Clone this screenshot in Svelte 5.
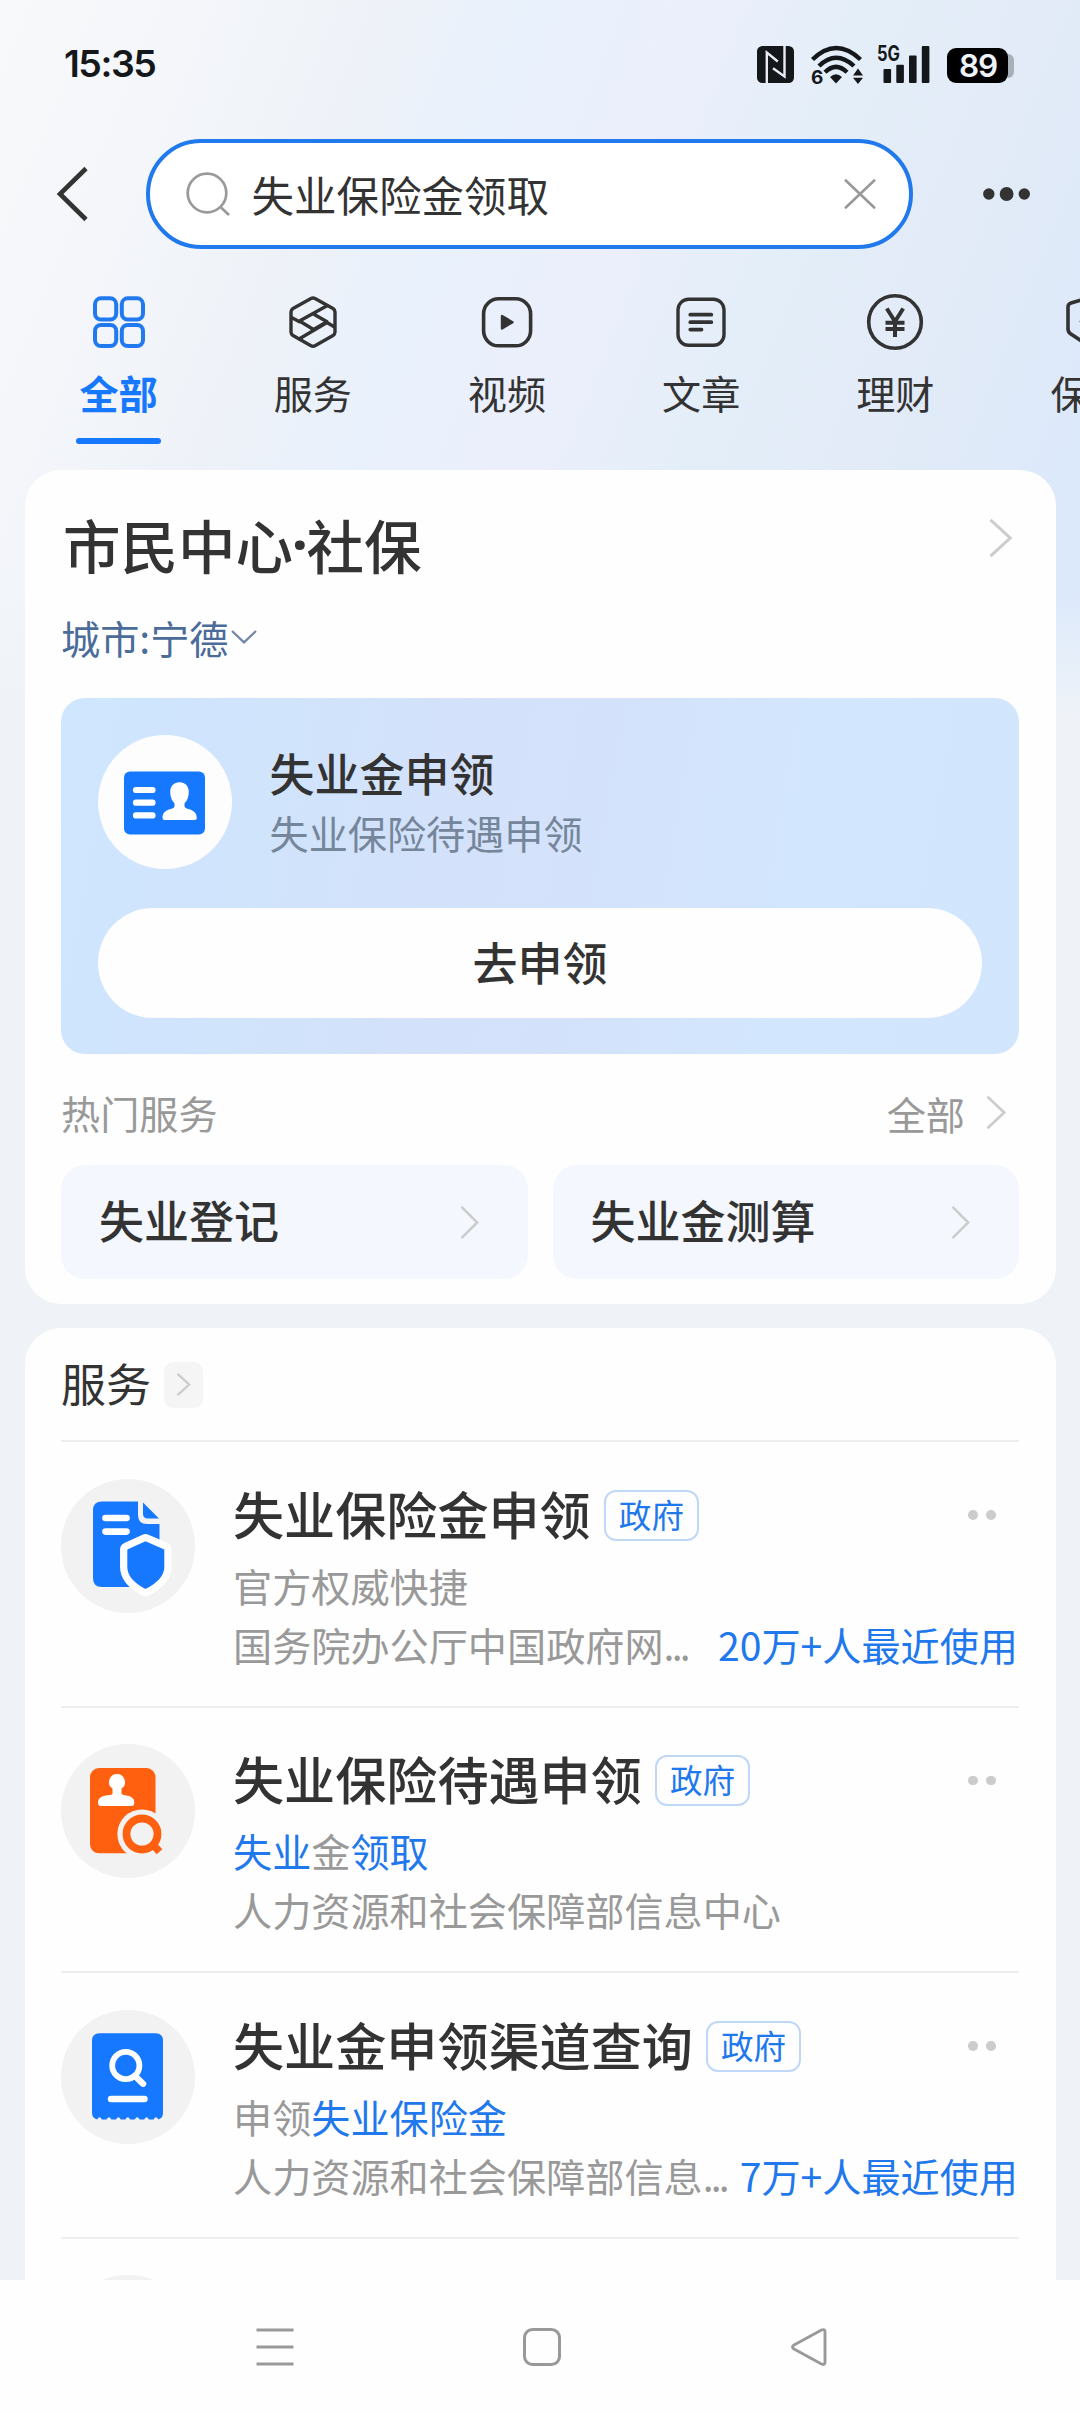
<script>
  const tabs = [
    { id: 'all', label: '全部' },
    { id: 'service', label: '服务' },
    { id: 'video', label: '视频' },
    { id: 'article', label: '文章' },
    { id: 'finance', label: '理财' },
    { id: 'insurance', label: '保险' }
  ];
  let active = $state('all');

  const hot = ['失业登记', '失业金测算'];

  const services = [
    {
      icon: 'shield',
      title: '失业保险金申领',
      desc: [{ t: '官方权威快捷' }],
      org: '国务院办公厅中国政府网',
      cut: true,
      usage: '20万+人最近使用'
    },
    {
      icon: 'stamp',
      title: '失业保险待遇申领',
      desc: [{ t: '失业', hit: true }, { t: '金' }, { t: '领取', hit: true }],
      org: '人力资源和社会保障部信息中心'
    },
    {
      icon: 'receipt',
      title: '失业金申领渠道查询',
      desc: [{ t: '申领' }, { t: '失业保险金', hit: true }],
      org: '人力资源和社会保障部信息',
      cut: true,
      usage: '7万+人最近使用'
    }
  ];
</script>

{#snippet chevron(w, h, sw)}
  <svg class="chev" width={w} height={h} viewBox="0 0 {w} {h}" fill="none" stroke-width={sw}>
    <path d="M1.5 0.8 L{w - 1.8} {h / 2} L1.5 {h - 0.8}" />
  </svg>
{/snippet}

{#snippet tabIcon(id)}
  <svg class="tab-icon" width="60" height="60" viewBox="0 0 60 60" fill="none" stroke="currentColor" stroke-width="3.6" stroke-linejoin="round" stroke-linecap="round">
    {#if id === 'all'}
      <rect x="6" y="6.3" width="21.2" height="21.2" rx="6" stroke-width="4" />
      <rect x="32.8" y="6.3" width="21.2" height="21.2" rx="6" stroke-width="4" />
      <rect x="6" y="32.9" width="21.2" height="21.2" rx="6" stroke-width="4" />
      <rect x="32.8" y="32.9" width="21.2" height="21.2" rx="6" stroke-width="4" />
    {:else if id === 'service'}
      <path d="M28 6.5 Q30 5.4 32 6.5 L50 16.5 Q52 17.8 52 20 V40 Q52 42.2 50 43.5 L32 53.7 Q30 54.8 28 53.7 L10 43.5 Q8 42.2 8 40 V20 Q8 17.8 10 16.5 Z" stroke-width="3.4" />
      <path d="M44 13.8 L16.5 29 L30.5 37.5 L44 29.8 L30 21.7 M8.5 25.5 L16.5 29.8 M16.5 46.8 L44 30.5 L51.5 35" stroke-width="3.4" />
    {:else if id === 'video'}
      <rect x="6.6" y="6.8" width="47" height="47" rx="15" />
      <path d="M25 24 V36.5 L35.5 30.2 Z" fill="currentColor" stroke-width="2.4" />
    {:else if id === 'article'}
      <rect x="7" y="7.3" width="46" height="46" rx="10.5" stroke-width="3.4" />
      <path d="M19.3 22.7 H40.3 M19.3 30.2 H40.3 M19.3 37.6 H30.5" stroke-width="3.8" />
    {:else if id === 'finance'}
      <circle cx="30" cy="30" r="26.3" stroke-width="3.6" />
      <path d="M21.8 16.5 L30 29.5 L38.2 16.5 M30 29.5 V45 M20.5 30.8 H39.5 M20.5 37 H39.5" stroke-width="4" stroke-linecap="butt" />
    {:else}
      <path d="M30 5.5 L49 11 Q52 12 52 15 V37 Q52 40 49.5 41.8 L30 54.5 L10.5 41.8 Q8 40 8 37 V15 Q8 12 11 11 Z" />
      <path d="M21.5 29.5 L28 36 L41 23" />
    {/if}
  </svg>
{/snippet}

{#snippet serviceIcon(id)}
  <svg width="134" height="134" viewBox="0 0 134 134">
    {#if id === 'shield'}
      <path fill="#1677ff" d="M41 22.5 H77 V36 Q77 45 86 45 H98.5 V108 H41 Q32 108 32 99 V31.5 Q32 22.5 41 22.5 Z" />
      <path fill="#1677ff" d="M82 23.5 L98 39.5 H87 Q82 39.5 82 34.5 Z" />
      <path stroke="#fff" stroke-width="6.6" stroke-linecap="round" d="M44.5 39 H65.5 M44.5 52.6 H65.5" />
      <path fill="#1677ff" stroke="#fff" stroke-width="14.5" stroke-linejoin="round" paint-order="stroke" d="M84.5 62.3 L103.3 70.5 V88 Q103.3 100.5 84.5 110 Q66.3 100.5 66.3 88 V70.5 Z" />
    {:else if id === 'stamp'}
      <rect x="29" y="24" width="65.5" height="85.3" rx="9" fill="#ff6010" />
      <path fill="#fff" d="M56 30 a8 8 0 0 1 4.5 14.6 V49.5 Q61 51 64 51.3 Q73.3 52.5 73.3 58 V59 Q73.3 62 70.3 62 H40 Q37 62 37 59 V58 Q37 52.5 46.5 51.3 Q51.5 51 51.5 49.5 V44.6 A8 8 0 0 1 56 30 Z" />
      <circle cx="81" cy="90" r="24.6" fill="#f2f2f2" />
      <rect x="81" y="109.3" width="24" height="8" fill="#f2f2f2" />
      <circle cx="81" cy="90" r="15.5" fill="none" stroke="#ff6010" stroke-width="7.8" />
      <path d="M91.5 100 L98.5 107.8" stroke="#ff6010" stroke-width="7.5" />
    {:else if id === 'receipt'}
      <path fill="#1677ff" d="M38.5 23.3 H94.5 Q102 23.3 102 31 V103 Q102 108 97.3 109.5 q-2.3 -4.6 -4.7 0 h-4.7 q-2.3 -4.6 -4.7 0 h-4.7 q-2.3 -4.6 -4.7 0 h-4.7 q-2.3 -4.6 -4.7 0 h-4.7 q-2.3 -4.6 -4.7 0 h-4.7 q-2.3 -4.6 -4.7 0 h-4.7 q-2.3 -4.6 -4.7 0 Q31 108 31 103 V31 Q31 23.3 38.5 23.3 Z" />
      <circle cx="64.8" cy="55.5" r="13.6" fill="none" stroke="#fff" stroke-width="5.8" />
      <path stroke="#fff" stroke-width="6.4" stroke-linecap="round" d="M74 66 L82 73.7 M50 89 H83.5" />
    {/if}
  </svg>
{/snippet}

<div class="phone">
  <div class="screen">
    <div class="status">
      <span class="time">15:35</span>
      <svg class="nfc" width="37" height="37" viewBox="0 0 37 37">
        <rect width="37" height="37" rx="5.5" fill="#15181b" />
        <path d="M9.8 37 V6.5 L20.8 15.5 M27.5 0 V30.5 L16 22.3" fill="none" stroke="#e8edf8" stroke-width="2.4" />
      </svg>
      <svg class="wifi" width="53" height="40" viewBox="0 0 53 40">
        <g fill="none" stroke="#15181b" stroke-width="4.4">
          <path d="M1.5 13.5 Q25 -9.5 49.5 13.5" />
          <path d="M8 20 Q25 3.5 43 20" />
          <path d="M14 26.3 Q25 15.5 36 26.3" />
        </g>
        <path d="M19 31 Q25 25.5 31 31 L25 37.5 Z" fill="#15181b" />
        <path d="M42 29.5 L47 22.5 L52 29.5 Z M42 31.8 L47 38 L52 31.8 Z" fill="#15181b" />
        <text x="0" y="37.6" font-size="19" font-weight="700" fill="#15181b">6</text>
      </svg>
      <svg class="signal" width="53" height="38" viewBox="0 0 53 38" fill="#15181b">
        <text x="0" y="15" font-size="21" font-weight="700" textLength="23" lengthAdjust="spacingAndGlyphs">5G</text>
        <rect x="6.5" y="23" width="7.6" height="14" rx="1" />
        <rect x="19.3" y="18.7" width="7.6" height="18.3" rx="1" />
        <rect x="32" y="9.5" width="7.6" height="27.5" rx="1" />
        <rect x="44.8" y="0" width="7.6" height="37" rx="1" />
      </svg>
      <div class="battery">
        <span class="level">89</span>
        <span class="tip"></span>
      </div>
    </div>

    <div class="search-row">
      <svg class="back" width="32" height="52" viewBox="0 0 32 52" fill="none" stroke="#333" stroke-width="4.6">
        <path d="M30 0.5 L4 26 L30 51.5" />
      </svg>
      <div class="search">
        <svg width="45" height="45" viewBox="0 0 45 45" fill="none" stroke="#999" stroke-width="2.7">
          <circle cx="21" cy="21" r="19.3" />
          <path d="M35 35.5 L43 43" />
        </svg>
        <span class="query">失业保险金领取</span>
        <svg width="32" height="30" viewBox="0 0 32 30" stroke="#999" stroke-width="2.6">
          <path d="M1 0.8 L31 29.2 M31 0.8 L1 29.2" />
        </svg>
      </div>
      <svg class="more" width="48" height="14" viewBox="0 0 48 14" fill="#333">
        <circle cx="5.8" cy="7" r="5.7" /><circle cx="23.6" cy="7" r="6.9" /><circle cx="41.3" cy="7" r="5.7" />
      </svg>
    </div>

    <div class="tabs">
      {#each tabs as tab}
        <div class="tab" class:active={active === tab.id} role="tab" tabindex="0" aria-selected={active === tab.id} onclick={() => (active = tab.id)} onkeydown={() => (active = tab.id)}>
          {@render tabIcon(tab.id)}
          <span class="tab-label">{tab.label}</span>
          <span class="bar"></span>
        </div>
      {/each}
    </div>

    <section class="card civic">
      <div class="civic-head">
        <h1>市民中心<span class="mid">·</span>社保</h1>
        {@render chevron(23, 38, 3)}
      </div>
      <div class="city">
        <span>城市:宁德</span>
        <svg width="26" height="14" viewBox="0 0 26 14" fill="none" stroke="#7387a8" stroke-width="2.3"><path d="M1 1 L13 12.3 L25 1" /></svg>
      </div>

      <div class="apply">
        <div class="apply-top">
          <div class="disc white">
            <svg width="134" height="134" viewBox="0 0 134 134">
              <rect x="26" y="36.5" width="81" height="63" rx="6" fill="#1677ff" />
              <path stroke="#fff" stroke-width="6.2" stroke-linecap="round" d="M38 55 H54.5 M38 67.7 H54.5 M38 80.4 H54.5" />
              <path fill="#fff" d="M81.5 47.2 C87.5 47.2 90.8 51.5 90.8 57 C90.8 62 89 66 86.5 68.5 V71.5 Q87 73.3 90 74 C96 75.5 98.8 78 98.8 83 Q98.8 85 96.8 85 H66.5 Q64.5 85 64.5 83 C64.5 78 67 75.5 73 74 Q76 73.3 76.5 71.5 V68.5 C74 66 72.2 62 72.2 57 C72.2 51.5 75.5 47.2 81.5 47.2 Z" />
            </svg>
          </div>
          <div class="apply-text">
            <div class="apply-title">失业金申领</div>
            <div class="apply-sub">失业保险待遇申领</div>
          </div>
        </div>
        <div class="cta">去申领</div>
      </div>

      <div class="hot-head">
        <span>热门服务</span>
        <span class="all">全部{@render chevron(20, 33, 2.7)}</span>
      </div>
      <div class="hot">
        {#each hot as item}
          <div class="tile"><span>{item}</span>{@render chevron(19, 33, 2.5)}</div>
        {/each}
      </div>
    </section>

    <section class="card list">
      <div class="list-head">
        <h2>服务</h2>
        <span class="chip">{@render chevron(15, 23, 2.3)}</span>
      </div>
      {#each services as s}
        <div class="row">
          <div class="disc">{@render serviceIcon(s.icon)}</div>
          <div class="info">
            <div class="title-line">
              <span class="title">{s.title}</span>
              <span class="badge">政府</span>
              <span class="dots"><i></i><i></i></span>
            </div>
            <div class="desc">{#each s.desc as d}<span class:hit={d.hit}>{d.t}</span>{/each}</div>
            <div class="org-line">
              <span>{s.org}{#if s.cut}<span class="cut">...</span>{/if}</span>
              {#if s.usage}<span class="hit">{s.usage}</span>{/if}
            </div>
          </div>
        </div>
      {/each}
      <div class="row"><div class="disc"></div></div>
    </section>
  </div>

  <div class="nav">
    <svg width="38" height="38" viewBox="0 0 38 38" fill="none" stroke="#999" stroke-width="3.2"><path d="M0.5 2 H37.5 M0.5 19 H37.5 M0.5 36 H37.5" /></svg>
    <svg width="38" height="38" viewBox="0 0 38 38" fill="none" stroke="#999" stroke-width="3"><rect x="1.5" y="1.5" width="35" height="35" rx="8" /></svg>
    <svg width="38" height="38" viewBox="0 0 38 38" fill="none" stroke="#999" stroke-width="2.9" stroke-linejoin="round"><path d="M31.5 2 Q35 0.7 35 4 V34 Q35 37.5 31.5 36 L4 21 Q1 19 4 17 Z" /></svg>
  </div>
</div>

<style>
  :global(body) {
    margin: 0;
    background: #fefefe;
  }
  .phone {
    width: 1080px;
    height: 2414px;
    display: flex;
    flex-direction: column;
    overflow: hidden;
    color: #333;
    font-family: 'Noto Sans CJK SC', sans-serif;
    font-size: 39.15px;
    line-height: 60px;
  }
  svg {
    display: block;
    flex: none;
    overflow: visible;
  }
  .screen {
    height: 2280px;
    flex: none;
    overflow: hidden;
    background:
      linear-gradient(to bottom, rgba(239, 243, 248, 0) 590px, #eff3f8 720px),
      linear-gradient(112deg, #f8f9fa 0, #f4f6fa 180px, #eef2f8 360px, #e9f1fc 500px, #ebeffb 660px, #e4eef9 800px, #e2ebf7 980px, #dce9fb 1180px);
  }
  .status {
    height: 139px;
    box-sizing: border-box;
    padding: 44px 66px 0 64px;
    display: flex;
    align-items: flex-start;
    font-family: Inter, sans-serif;
    color: #15181b;
  }
  .time {
    flex: 1;
    font-size: 37.5px;
    font-weight: 600;
    line-height: 40px;
    letter-spacing: -1.5px;
  }
  .nfc {
    margin-top: 2px;
  }
  .wifi {
    margin: 2px 0 0 17px;
  }
  .signal {
    margin: 2px 0 0 13px;
  }
  .battery {
    display: flex;
    align-items: center;
    margin: 4px 0 0 17px;
  }
  .level {
    width: 61px;
    height: 35px;
    border-radius: 9px;
    background: #000;
    color: #eef2fa;
    font-size: 31.5px;
    font-weight: 600;
    line-height: 35px;
    text-align: center;
    text-indent: 1px;
    letter-spacing: -1.2px;
  }
  .tip {
    width: 6px;
    height: 24px;
    border-radius: 0 7px 7px 0;
    background: #a8afb8;
  }
  .search-row {
    height: 110px;
    display: flex;
    align-items: center;
    padding-left: 56px;
  }
  .search {
    width: 767px;
    height: 110px;
    box-sizing: border-box;
    margin-left: 58px;
    padding: 0 33px 0 36px;
    border: 3.5px solid #2179ee;
    border-width: 4px;
    border-radius: 55px;
    background: #fff;
    display: flex;
    align-items: center;
  }
  .query {
    flex: 1;
    margin-left: 20.5px;
    font-size: 42.5px;
  }
  .more {
    margin-left: 70px;
  }
  .tabs {
    display: flex;
    height: 221px;
    padding-left: 21.5px;
    overflow: hidden;
  }
  .tab {
    width: 194.2px;
    flex: none;
    display: flex;
    flex-direction: column;
    align-items: center;
    padding-top: 43px;
  }
  .tab-icon {
    color: #333;
  }
  .tab-label {
    margin-top: 10px;
  }
  .bar {
    width: 85px;
    height: 6px;
    margin-top: 16px;
    border-radius: 3px;
  }
  .active .bar {
    background: #1677ff;
  }
  .active .tab-icon {
    color: #2179f0;
  }
  .active .tab-label {
    color: #1677ff;
    font-weight: 700;
  }
  .card {
    box-sizing: border-box;
    margin: 0 24.5px;
    padding: 0 36.5px;
    border-radius: 36px;
    background: #fefefe;
  }
  .chev {
    stroke: #ccc;
  }
  .civic {
    height: 834px;
  }
  .civic-head {
    display: flex;
    justify-content: space-between;
    padding: 34px 7px 0 2px;
  }
  .civic-head .chev {
    margin-top: 15px;
  }
  h1 {
    display: flex;
    margin: 0;
    font-size: 57.5px;
    font-weight: 500;
    line-height: 80px;
  }
  .mid {
    width: 13.5px;
    display: flex;
    justify-content: center;
    font-family: 'Noto Sans', sans-serif;
    font-weight: 700;
  }
  .city {
    display: flex;
    align-items: center;
    gap: 3px;
    margin-top: 23px;
    height: 60px;
    color: #4b6b99;
  }
  .apply {
    box-sizing: border-box;
    height: 356px;
    margin-top: 31px;
    padding: 37px;
    border-radius: 24px;
    background: linear-gradient(100deg, #cfe6fe 0, #d0e4fc 22%, #d4e1fa 42%, #d3e3fb 60%, #d2e6fd 75%, #d1e6fd 100%);
  }
  .apply-top {
    display: flex;
    height: 173px;
  }
  .apply-text {
    margin-left: 37.5px;
  }
  .apply-title {
    margin-top: 8px;
    font-size: 45px;
    font-weight: 500;
  }
  .apply-sub {
    margin-top: -1px;
    color: #75869a;
  }
  .disc {
    width: 134px;
    height: 134px;
    flex: none;
    border-radius: 50%;
    background: #f2f2f2;
  }
  .disc.white {
    background: #fdfdfe;
  }
  .cta {
    height: 110px;
    border-radius: 55px;
    background: #fefefe;
    font-size: 45px;
    font-weight: 500;
    line-height: 107px;
    text-align: center;
  }
  .hot-head {
    display: flex;
    justify-content: space-between;
    height: 111px;
    line-height: 116px;
    color: #999;
  }
  .all {
    display: flex;
    align-items: center;
    gap: 21px;
    padding: 6px 13px 0 0;
  }
  .hot {
    display: grid;
    grid-template-columns: 1fr 1fr;
    gap: 25px;
  }
  .tile {
    height: 114px;
    padding: 0 49px 0 38px;
    border-radius: 24px;
    background: #f4f7fd;
    display: flex;
    align-items: center;
    justify-content: space-between;
    font-size: 45px;
    font-weight: 500;
  }
  .tile span {
    margin-top: -4px;
  }
  .list {
    height: 1200px;
    margin-top: 24px;
  }
  .list-head {
    display: flex;
    align-items: center;
    height: 112px;
  }
  h2 {
    margin: 0;
    font-size: 45px;
    font-weight: 400;
    line-height: 60px;
    padding-bottom: 2px;
  }
  .chip {
    width: 39px;
    height: 46px;
    margin: 1px 0 0 13px;
    border-radius: 9px;
    background: #f5f5f5;
    display: flex;
    align-items: center;
    justify-content: center;
  }
  .row {
    box-sizing: border-box;
    height: 265.6px;
    padding-top: 36.5px;
    border-top: 2px solid #eee;
    display: flex;
  }
  .info {
    flex: 1;
    margin-left: 38px;
  }
  .title-line {
    display: flex;
    align-items: center;
    height: 73px;
  }
  .title {
    font-size: 51.1px;
    font-weight: 500;
    margin-top: -5px;
  }
  .badge {
    box-sizing: border-box;
    width: 94.5px;
    height: 51px;
    margin-left: 13.5px;
    border: 2px solid #c0d8f8;
    border-radius: 12px;
    color: #1f78ec;
    font-size: 32.6px;
    line-height: 44px;
    text-align: center;
  }
  .dots {
    display: flex;
    gap: 8.5px;
    margin-left: auto;
    padding-right: 23px;
  }
  .dots i {
    width: 9.6px;
    height: 9.6px;
    border-radius: 50%;
    background: #ccc;
  }
  .desc {
    margin-top: 3px;
    color: #999;
  }
  .org-line {
    display: flex;
    justify-content: space-between;
    margin-top: -1px;
    color: #999;
  }
  .cut {
    letter-spacing: -2.8px;
  }
  .hit {
    color: #1f78ec;
  }
  .org-line .hit {
    margin-right: 1px;
  }
  .nav {
    flex: 1;
    display: flex;
    justify-content: center;
    gap: 229px;
    padding: 48px 0 0 4px;
    background: #fefefe;
  }
</style>
